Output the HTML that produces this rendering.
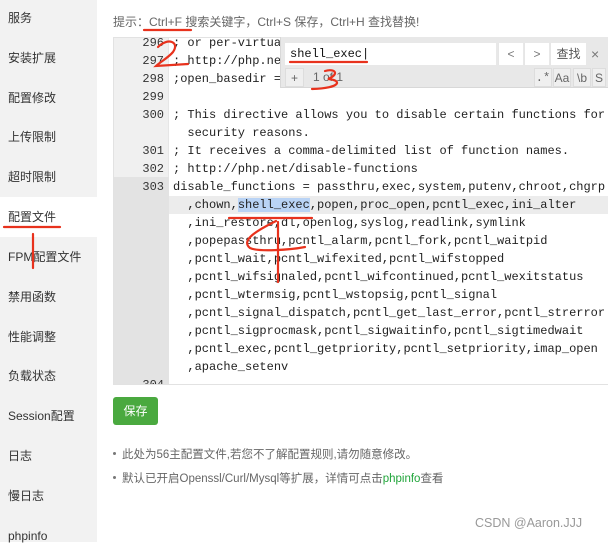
<!DOCTYPE html>
<html><head><meta charset="utf-8"><style>
*{margin:0;padding:0;box-sizing:border-box}
body{width:608px;height:542px;overflow:hidden;background:#fff;font-family:"Liberation Sans","Noto Sans CJK SC",sans-serif;position:relative;color:#333}
.side{position:absolute;left:0;top:0;width:97px;height:542px;background:#f2f2f2}
.side .it{position:absolute;left:8px;font-size:12px;color:#333;line-height:16px}
.side .act{position:absolute;left:0;top:197px;width:97px;height:40px;background:#fff}
.hint{position:absolute;left:113px;top:13px;font-size:12px;color:#666}
.ed{position:absolute;left:113px;top:37px;width:495px;height:348px;border:1px solid #e2e2e2;border-right:none;overflow:hidden;background:#fff}
.gut{position:absolute;left:0;top:0;width:55px;height:100%;background:#f0f0f0;border-right:1px solid #e6e6e6}
.code{position:absolute;left:0;top:-4px;width:100%;font-family:"Liberation Mono",monospace;font-size:12px;line-height:18px;color:#222}
.ln{position:relative;height:18px;white-space:pre}
.ln .n{position:absolute;left:0;width:50px;text-align:right;color:#333}
.ln .t{position:absolute;left:59px}
.hl{position:absolute;left:55px;right:0;top:0;height:18px;background:#ececec}
.sel{background:#b9d3f5}
.sp{position:absolute;left:280px;top:37px;width:328px;height:51px;background:#e8e8e8;border-left:1px solid #d8d8d8;border-bottom:1px solid #d8d8d8}
.inp{position:absolute;left:4px;top:6px;width:211px;height:22px;background:#fff;font-family:"Liberation Mono",monospace;font-size:12px;line-height:22px;padding-left:5px;color:#111}
.b{position:absolute;top:6px;height:22px;background:#fff;font-size:12px;line-height:22px;text-align:center;color:#777;border-left:1px solid #e6e6e6}
.s{position:absolute;top:31px;height:19px;font-size:12px;line-height:19px;text-align:center;color:#666;background:#efefef;border:1px solid #ddd}
.btn{position:absolute;left:113px;top:397px;width:45px;height:28px;background:#4aa93f;border-radius:3px;color:#fff;font-size:12px;line-height:28px;text-align:center}
.li{position:absolute;left:113px;font-size:11.5px;color:#666}
.li i{display:inline-block;width:3px;height:3px;border-radius:2px;background:#777;margin:0 6px 3px 0}
.wm{position:absolute;left:475px;top:516px;font-size:12.5px;color:#999}
</style></head><body>
<div class="side">
<div class="act"></div>
<div class="it" style="top:10px">服务</div>
<div class="it" style="top:50px">安装扩展</div>
<div class="it" style="top:90px">配置修改</div>
<div class="it" style="top:129px">上传限制</div>
<div class="it" style="top:169px">超时限制</div>
<div class="it" style="top:209px">配置文件</div>
<div class="it" style="top:249px">FPM配置文件</div>
<div class="it" style="top:289px">禁用函数</div>
<div class="it" style="top:329px">性能调整</div>
<div class="it" style="top:368px">负载状态</div>
<div class="it" style="top:408px">Session配置</div>
<div class="it" style="top:448px">日志</div>
<div class="it" style="top:488px">慢日志</div>
<div class="it" style="top:528px">phpinfo</div>
</div>
<div class="hint">提示：Ctrl+F 搜索关键字，Ctrl+S 保存，Ctrl+H 查找替换!</div>
<div class="ed">
<div class="gut"></div>
<div style="position:absolute;left:0;top:139px;width:55px;height:209px;background:#e3e3e3"></div>
<div class="code">
<div class="ln"><span class="n">296</span><span class="t">; or per-virtual-host web server configuration file.</span></div>
<div class="ln"><span class="n">297</span><span class="t">; http://php.net/open-basedir</span></div>
<div class="ln"><span class="n">298</span><span class="t">;open_basedir =</span></div>
<div class="ln"><span class="n">299</span><span class="t"></span></div>
<div class="ln"><span class="n">300</span><span class="t">; This directive allows you to disable certain functions for</span></div>
<div class="ln"><span class="t">  security reasons.</span></div>
<div class="ln"><span class="n">301</span><span class="t">; It receives a comma-delimited list of function names.</span></div>
<div class="ln"><span class="n">302</span><span class="t">; http://php.net/disable-functions</span></div>
<div class="ln"><span class="n">303</span><span class="t">disable_functions = passthru,exec,system,putenv,chroot,chgrp</span></div>
<div class="ln"><div class="hl"></div><span class="t">  ,chown,<span class="sel">shell_exec</span>,popen,proc_open,pcntl_exec,ini_alter</span></div>
<div class="ln"><span class="t">  ,ini_restore,dl,openlog,syslog,readlink,symlink</span></div>
<div class="ln"><span class="t">  ,popepassthru,pcntl_alarm,pcntl_fork,pcntl_waitpid</span></div>
<div class="ln"><span class="t">  ,pcntl_wait,pcntl_wifexited,pcntl_wifstopped</span></div>
<div class="ln"><span class="t">  ,pcntl_wifsignaled,pcntl_wifcontinued,pcntl_wexitstatus</span></div>
<div class="ln"><span class="t">  ,pcntl_wtermsig,pcntl_wstopsig,pcntl_signal</span></div>
<div class="ln"><span class="t">  ,pcntl_signal_dispatch,pcntl_get_last_error,pcntl_strerror</span></div>
<div class="ln"><span class="t">  ,pcntl_sigprocmask,pcntl_sigwaitinfo,pcntl_sigtimedwait</span></div>
<div class="ln"><span class="t">  ,pcntl_exec,pcntl_getpriority,pcntl_setpriority,imap_open</span></div>
<div class="ln"><span class="t">  ,apache_setenv</span></div>
<div class="ln"><span class="n">304</span><span class="t"></span></div>
</div>
</div>
<div class="sp">
<div class="inp">shell_exec|</div>
<div class="b" style="left:217px;width:25px">&lt;</div>
<div class="b" style="left:243px;width:25px">&gt;</div>
<div class="b" style="left:269px;width:36px;color:#555">查找</div>
<div style="position:absolute;left:310px;top:6px;font-size:14px;line-height:22px;color:#777">×</div>
<div class="s" style="left:4px;width:19px">+</div>
<div style="position:absolute;left:32px;top:31px;font-size:12px;line-height:19px;color:#666">1 of 1</div>
<div class="s" style="left:253px;width:18px;font-family:'Liberation Mono',monospace">.*</div>
<div class="s" style="left:272px;width:18px">Aa</div>
<div class="s" style="left:292px;width:18px">\b</div>
<div class="s" style="left:311px;width:14px">S</div>
</div>
<div class="btn">保存</div>
<div class="li" style="top:446px"><i></i>此处为56主配置文件,若您不了解配置规则,请勿随意修改。</div>
<div class="li" style="top:470px"><i></i>默认已开启Openssl/Curl/Mysql等扩展，详情可点击<span style="color:#20a53a">phpinfo</span>查看</div>
<div class="wm">CSDN @Aaron.JJJ</div>
<svg width="608" height="542" style="position:absolute;left:0;top:0" fill="none" stroke="#e8321d" stroke-width="2.2" stroke-linecap="round">
<path d="M144 30 L191 30"/>
<path d="M158 47 C168 37 180 42 173 52 C168 58 160 62 156 66 L188 64"/>
<path d="M290 62 L367 62"/>
<path d="M325 71 C335 68 340 74 328 79 C342 80 342 88 312 89"/>
<path d="M229 218 L312 218"/>
<path d="M276 221 C258 230 240 240 250 248 C258 252 290 250 305 247"/>
<path d="M278 222 L278 282"/>
<path d="M4 227 L60 227"/>
<path d="M33 234 L33 268"/>
</svg>
</body></html>
